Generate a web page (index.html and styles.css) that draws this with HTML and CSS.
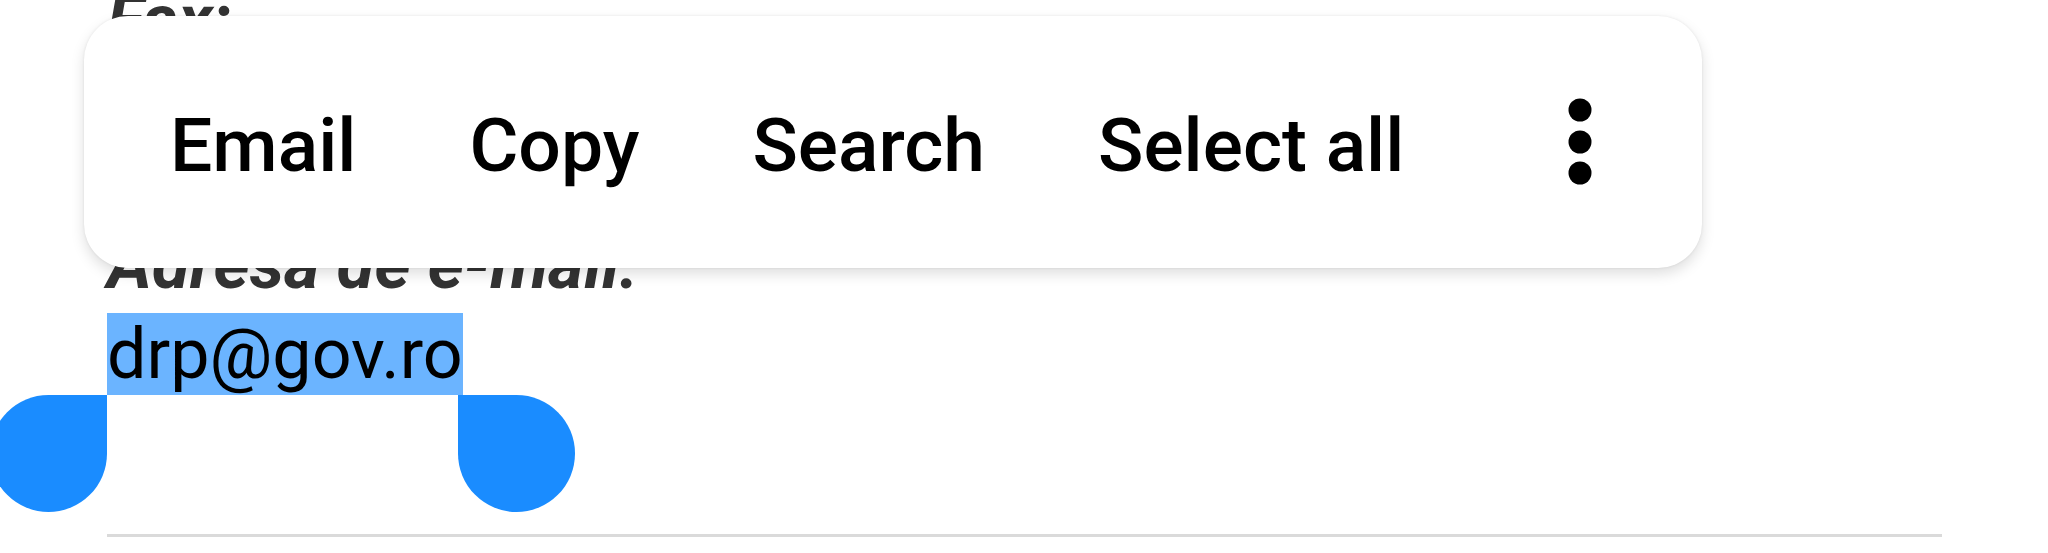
FILE: index.html
```html
<!DOCTYPE html>
<html lang="ro">
<head>
<meta charset="utf-8">
<title>Contact</title>
<link rel="stylesheet" href="styles.css">
</head>
<body>
<main class="content">
  <div class="field field-fax">
    <div class="label">Fax:</div>
  </div>
  <div class="field">
    <div class="label">Adresa de e-mail:</div>
    <div class="value"><span class="selection">drp@gov.ro<span class="handle handle-start"></span><span class="handle handle-end"></span></span></div>
  </div>
  <hr class="divider">
</main>

<div class="toolbar">
  <span class="tool-item">Email</span>
  <span class="tool-item">Copy</span>
  <span class="tool-item">Search</span>
  <span class="tool-item">Select all</span>
  <span class="tool-more" aria-label="More options">
    <svg width="24" height="88" viewBox="0 0 24 88"><circle cx="12" cy="12" r="11.5" fill="#000"/><circle cx="12" cy="44" r="11.5" fill="#000"/><circle cx="12" cy="75" r="11.5" fill="#000"/></svg>
  </span>
</div>
</body>
</html>
```
FILE: styles.css
```css
html, body {
  margin: 0;
  padding: 0;
  background: #ffffff;
  overflow: hidden;
}

body {
  width: 2048px;
  height: 553px;
  position: relative;
  font-family: Roboto, "Liberation Sans", sans-serif;
}

.content {
  padding: 0 106px 0 107px;
  margin-top: -21px;
}

.label {
  font-size: 69px;
  font-weight: 700;
  font-style: italic;
  color: #333333;
  line-height: 82px;
}

.field-fax {
  height: 82px;
  margin-bottom: 163px;
}

.field .label {
  margin-bottom: 7px;
}

.value {
  font-size: 70px;
  line-height: 82px;
  color: #000000;
}

.selection {
  position: relative;
  background: #6bb4ff;
}

.handle {
  position: absolute;
  top: 100%;
  width: 117px;
  height: 117px;
  background: #1a8cff;
}

.handle-start {
  left: -117px;
  border-radius: 50% 0 50% 50%;
}

.handle-end {
  left: calc(100% - 5px);
  border-radius: 0 50% 50% 50%;
}

.divider {
  border: 0;
  height: 3px;
  background: #dadada;
  margin: 139px 0 0 0;
}

.toolbar {
  position: absolute;
  left: 84px;
  top: 16px;
  width: 1618px;
  height: 252px;
  box-sizing: border-box;
  background: #ffffff;
  border-radius: 44px;
  box-shadow: 0 6px 14px rgba(0, 0, 0, 0.13), 0 0 3px rgba(0, 0, 0, 0.08);
  display: flex;
  align-items: center;
  gap: 113px;
  padding: 6px 110px 0 86px;
}

.tool-item {
  font-size: 75px;
  font-weight: 500;
  color: #000000;
  white-space: nowrap;
}

.tool-more {
  margin-left: auto;
  display: flex;
  margin-top: -6px;
}
```
